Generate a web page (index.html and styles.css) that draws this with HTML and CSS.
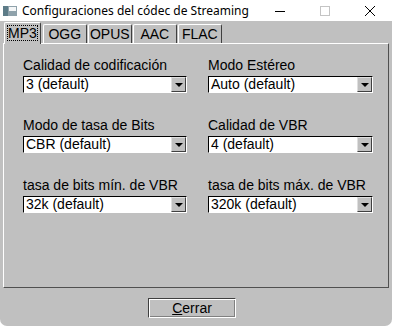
FILE: index.html
```html
<!DOCTYPE html>
<html lang="es">
<head>
  <meta charset="UTF-8">
  <meta name="viewport" content="width=device-width, initial-scale=1.0">
  <title>Configuraciones del códec de Streaming</title>
  <link rel="stylesheet" href="styles.css">
</head>
<body>
  <div class="window">
    <div class="titlebar">
      <svg class="app-icon" width="14" height="10" viewBox="0 0 14 10">
        <rect x="0" y="0" width="14" height="10" fill="#8fa2ab"/>
        <rect x="0" y="0" width="5" height="10" fill="#5d7c88"/>
        <rect x="6" y="1" width="7" height="4" fill="#f4f6f7"/>
      </svg>
      <span class="title">Configuraciones del códec de Streaming</span>
      <div class="controls">
        <span class="ctl">
          <svg width="10" height="10" viewBox="0 0 10 10"><line x1="0" y1="5.5" x2="10" y2="5.5" stroke="#000" stroke-width="1"/></svg>
        </span>
        <span class="ctl">
          <svg width="10" height="10" viewBox="0 0 10 10"><rect x="0.5" y="0.5" width="9" height="9" fill="none" stroke="#c4c4c4" stroke-width="1"/></svg>
        </span>
        <span class="ctl">
          <svg width="10" height="10" viewBox="0 0 10 10"><path d="M0 0 L10 10 M10 0 L0 10" stroke="#000" stroke-width="1"/></svg>
        </span>
      </div>
    </div>

    <div class="tabs">
      <div class="tab active"><span class="focus">MP3</span></div>
      <div class="tab">OGG</div>
      <div class="tab">OPUS</div>
      <div class="tab">AAC</div>
      <div class="tab">FLAC</div>
    </div>

    <div class="panel">
      <div class="field">
        <label>Calidad de codificación</label>
        <div class="combo"><span class="value">3 (default)</span><span class="arrow"></span></div>
      </div>
      <div class="field">
        <label>Modo Estéreo</label>
        <div class="combo"><span class="value">Auto (default)</span><span class="arrow"></span></div>
      </div>
      <div class="field">
        <label>Modo de tasa de Bits</label>
        <div class="combo"><span class="value">CBR (default)</span><span class="arrow"></span></div>
      </div>
      <div class="field">
        <label>Calidad de VBR</label>
        <div class="combo"><span class="value">4 (default)</span><span class="arrow"></span></div>
      </div>
      <div class="field">
        <label>tasa de bits mín. de VBR</label>
        <div class="combo"><span class="value">32k (default)</span><span class="arrow"></span></div>
      </div>
      <div class="field">
        <label>tasa de bits máx. de VBR</label>
        <div class="combo"><span class="value">320k (default)</span><span class="arrow"></span></div>
      </div>
    </div>

    <div class="footer">
      <button class="btn"><u>C</u>errar</button>
    </div>
  </div>
</body>
</html>
```

FILE: styles.css
```css
body {
  margin: 0;
  background: #fff;
  font-family: "Liberation Sans", Arial, sans-serif;
  font-size: 14px;
  color: #000;
}
.window {
  width: 392px;
  height: 326px;
  background: #c0c0c0;
  border-radius: 0 0 7px 7px;
  overflow: hidden;
}
.titlebar {
  height: 21px;
  background: #fff;
  display: flex;
  align-items: center;
}
.app-icon {
  margin-left: 3px;
  margin-top: 1px;
}
.title {
  margin-left: 5px;
  font-family: "Noto Sans", sans-serif;
  font-size: 12px;
}
.controls {
  margin-left: auto;
  display: flex;
  height: 100%;
}
.ctl {
  width: 45px;
  display: flex;
  align-items: center;
  justify-content: center;
}
.tabs {
  display: flex;
  align-items: flex-end;
  height: 22px;
  padding-left: 4px;
}
.tab {
  box-sizing: border-box;
  width: 44px;
  height: 19px;
  margin-left: 1px;
  text-align: center;
  line-height: 18px;
  border-top: 1px solid #fff;
  border-left: 1px solid #fff;
  border-right: 1px solid #404040;
  border-radius: 2px 2px 0 0;
}
.tab.active {
  width: auto;
  height: 22px;
  margin: 0 1px -1px 0;
  padding: 2px 2px 0;
  line-height: 16px;
  background: #c0c0c0;
  position: relative;
  z-index: 1;
}
.focus {
  display: inline-block;
  padding: 0 1px;
  outline: 1px dotted #000;
  outline-offset: -1px;
}
.panel {
  box-sizing: border-box;
  width: 386px;
  height: 245px;
  margin-left: 3px;
  padding: 13px 0 0 19px;
  border-top: 1px solid #fff;
  border-left: 1px solid #fff;
  border-right: 1px solid #505050;
  border-bottom: 1px solid #505050;
  display: grid;
  grid-template-columns: 164px 165px;
  grid-auto-rows: 36px;
  column-gap: 21px;
  row-gap: 24px;
}
.field label {
  display: block;
  height: 16px;
  line-height: 16px;
  margin-bottom: 3px;
}
.combo {
  box-sizing: border-box;
  height: 17px;
  display: flex;
  align-items: center;
  background: #fff;
  border-top: 1px solid #000;
  border-left: 1px solid #000;
  border-right: 1px solid #fff;
  border-bottom: 1px solid #fff;
}
.value {
  flex: 1;
  padding-left: 2px;
  line-height: 15px;
}
.arrow {
  box-sizing: border-box;
  width: 15px;
  height: 15px;
  background: #c0c0c0;
  border-top: 1px solid #dfdfdf;
  border-left: 1px solid #dfdfdf;
  border-right: 1px solid #404040;
  border-bottom: 1px solid #404040;
  display: flex;
  align-items: center;
  justify-content: center;
}
.arrow::after {
  content: "";
  border-left: 4px solid transparent;
  border-right: 4px solid transparent;
  border-top: 4px solid #000;
}
.footer {
  display: flex;
  justify-content: center;
  padding: 10px 8px 0 0;
}
.btn {
  box-sizing: border-box;
  width: 88px;
  height: 20px;
  padding: 0;
  background: #c0c0c0;
  font-family: "Liberation Sans", Arial, sans-serif;
  font-size: 14px;
  color: #000;
  border-top: 1px solid #404040;
  border-left: 1px solid #404040;
  border-right: 1px solid #fff;
  border-bottom: 1px solid #fff;
  box-shadow: inset 1px 1px #fff, inset -1px -1px #808080;
}
```
